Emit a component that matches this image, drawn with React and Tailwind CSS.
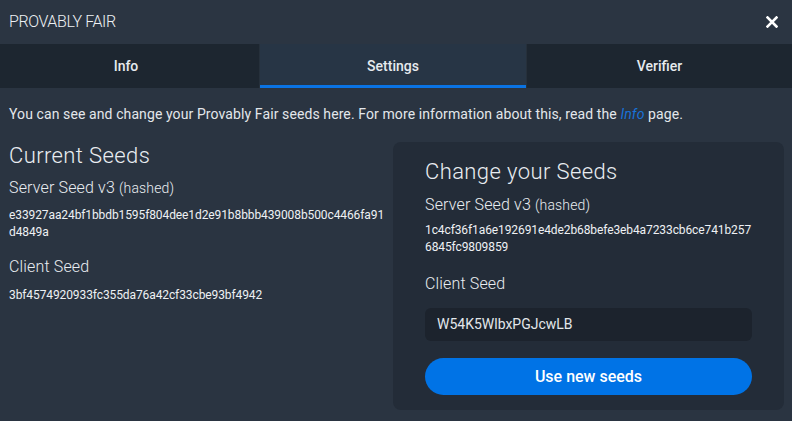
import React from "react";

export default function App() {
  return (
    <div className="w-[792px] h-[421px] bg-[#2a3441] text-[#e9edf1] overflow-hidden flex flex-col" style={{ fontFamily: "Roboto, 'Liberation Sans', sans-serif" }}>
      <div className="h-[44px] bg-[#2b3542] flex items-center justify-between pl-[9px] pr-[14px]">
        <div className="text-[16px] font-light text-[#eef1f4] tracking-[-0.4px]">PROVABLY FAIR</div>
        <svg width="12" height="12" viewBox="0 0 12 12">
          <path d="M1.5 1.5 L10.5 10.5 M10.5 1.5 L1.5 10.5" stroke="#ffffff" strokeWidth="2.6" strokeLinecap="square" />
        </svg>
      </div>
      <div className="h-[44px] flex bg-[#1d2630]">
        <div className="w-[260px] flex items-center justify-center pr-[7px] text-[14px] font-medium text-[#e6eaee] border-r border-[#26303b]">Info</div>
        <div className="w-[266px] flex items-center justify-center text-[14px] font-medium text-[#e6eaee] bg-[#273545] border-b-[3px] border-[#0a73e3] pt-[3px]">Settings</div>
        <div className="flex-1 flex items-center justify-center text-[14px] font-medium text-[#e6eaee] border-l border-[#26303b]">Verifier</div>
      </div>
      <div className="pl-[9px] pr-[8px] pt-[16px] flex-1 flex flex-col">
        <p className="text-[14px] leading-[20px] text-[#e3e7eb] tracking-[0.1px]">
          You can see and change your Provably Fair seeds here. For more information about this, read the <span className="italic text-[#1872d8]">Info</span> page.
        </p>
        <div className="flex mt-[18px]">
          <div className="w-[384px]">
            <h2 className="text-[22px] font-light leading-[28px] tracking-[0.4px]">Current Seeds</h2>
            <div className="mt-[8px] text-[16px] font-light leading-[20px] tracking-[0.15px]">Server Seed v3 <span className="text-[14px]">(hashed)</span></div>
            <div className="mt-[9px] text-[12px] leading-[17px] break-all w-[380px] text-[#eef1f4] tracking-[-0.1px]">e33927aa24bf1bbdb1595f804dee1d2e91b8bbb439008b500c4466fa91d4849a</div>
            <div className="mt-[16px] text-[16px] font-light leading-[20px] tracking-[0.15px]">Client Seed</div>
            <div className="mt-[10px] text-[12px] leading-[17px] text-[#eef1f4] tracking-[-0.1px]">3bf4574920933fc355da76a42cf33cbe93bf4942</div>
          </div>
          <div className="w-[391px] h-[268px] bg-[#232c38] rounded-[8px] px-[32px] pt-[16px]">
            <h2 className="text-[22px] font-light leading-[28px] tracking-[0.4px]">Change your Seeds</h2>
            <div className="mt-[9px] text-[16px] font-light leading-[20px] tracking-[0.15px]">Server Seed v3 <span className="text-[14px]">(hashed)</span></div>
            <div className="mt-[7px] text-[12px] leading-[17px] break-all text-[#eef1f4] tracking-[-0.1px]">1c4cf36f1a6e192691e4de2b68befe3eb4a7233cb6ce741b2576845fc9809859</div>
            <div className="mt-[18px] text-[16px] font-light leading-[20px] tracking-[0.15px]">Client Seed</div>
            <div className="mt-[14px] h-[33px] bg-[#1c232d] rounded-[6px] flex items-center px-[12px] text-[14px] text-[#e3e7eb]">W54K5WlbxPGJcwLB</div>
            <button className="mt-[17px] w-full h-[37px] rounded-full bg-[#0073e6] text-[16px] font-medium text-white flex items-center justify-center">Use new seeds</button>
          </div>
        </div>
      </div>
    </div>
  );
}
